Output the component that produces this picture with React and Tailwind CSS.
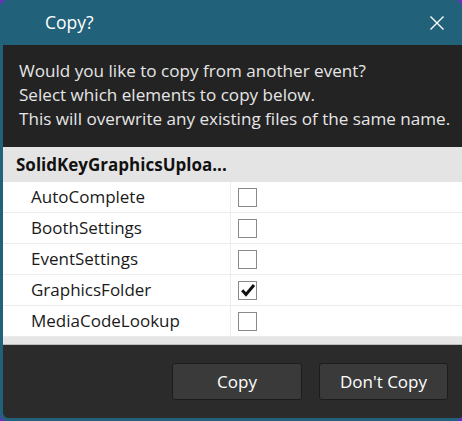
import React from "react";

const rows = [
  { name: "AutoComplete", checked: false },
  { name: "BoothSettings", checked: false },
  { name: "EventSettings", checked: false },
  { name: "GraphicsFolder", checked: true },
  { name: "MediaCodeLookup", checked: false },
];

export default function App() {
  return (
    <div className="w-[462px] h-[421px] bg-[#6b2fc0] overflow-hidden" style={{ fontFamily: '"Open Sans", "Noto Sans", sans-serif' }}>
      <div className="w-[462px] h-[421px] rounded-[7px] overflow-hidden bg-[#22617a] flex flex-col">
        <div className="h-[45px] shrink-0 flex items-center justify-between pl-[45px] pr-[17px]">
          <span className="text-[17.5px] text-white">Copy?</span>
          <svg width="16" height="16" viewBox="0 0 16 16" className="text-white">
            <path d="M1.5 1.5 L14.5 14.5 M14.5 1.5 L1.5 14.5" stroke="currentColor" strokeWidth="1.4" fill="none" />
          </svg>
        </div>
        <div className="flex-1 ml-[3px] mb-[3px] rounded-bl-[6px] overflow-hidden flex flex-col bg-[#232323]">
          <div className="h-[102px] shrink-0 pl-[16px] pt-[14px] text-[17.1px] leading-[24px] text-[#e6e6e6]">
            <div>Would you like to copy from another event?</div>
            <div>Select which elements to copy below.</div>
            <div>This will overwrite any existing files of the same name.</div>
          </div>
          <div className="bg-[#e4e4e4] shrink-0">
            <div className="h-[35px] flex items-center pl-[13px] text-[17px] font-bold text-[#111]">SolidKeyGraphicsUploa...</div>
            {rows.map((r) => (
              <div key={r.name} className="h-[31px] flex bg-white border-b border-[#ececec]">
                <div className="w-[228px] pl-[28px] flex items-center text-[17px] text-[#1a1a1a] border-r border-[#ececec]">{r.name}</div>
                <div className="pl-[7px] flex items-center">
                  <div className="w-[19px] h-[19px] border-[1.5px] border-[#8a8a8a] bg-white flex items-center justify-center">
                    {r.checked && (
                      <svg width="16" height="16" viewBox="0 0 16 16">
                        <path d="M2.2 8.2 L6 12.5 L14 3" stroke="#111" strokeWidth="3" fill="none" strokeLinejoin="miter" />
                      </svg>
                    )}
                  </div>
                </div>
              </div>
            ))}
            <div className="h-[8px] bg-[#e6e6e6] border-b border-[#bdbdbd]"></div>
          </div>
          <div className="flex-1 bg-[#2b2b2b] flex justify-end items-start pt-[18px] pr-[14px] gap-[17px]">
            <button className="w-[130px] h-[37px] rounded-[3px] bg-[#3a3a3a] border border-[#1c1c1c] text-white text-[17px]">Copy</button>
            <button className="w-[129px] h-[37px] rounded-[3px] bg-[#3a3a3a] border border-[#1c1c1c] text-white text-[17px]">Don't Copy</button>
          </div>
        </div>
      </div>
    </div>
  );
}
